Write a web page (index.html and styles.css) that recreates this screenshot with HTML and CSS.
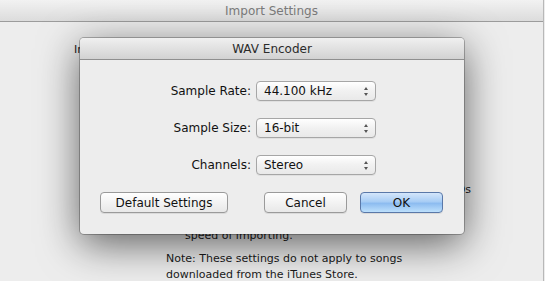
FILE: index.html
```html
<!DOCTYPE html>
<html lang="en">
<head>
    <meta charset="UTF-8">
    <title>Import Settings</title>
    <link rel="stylesheet" href="styles.css">
</head>
<body>
    <div class="window">
        <div class="titlebar">Import Settings</div>
        <div class="window-body">
            <div class="row-label">Import Using:</div>
            <div class="check-line">Use error correction when reading Audio CDs</div>
            <div class="hint">speed of importing.</div>
            <div class="note">Note: These settings do not apply to songs<br>downloaded from the iTunes Store.</div>
        </div>

        <div class="sheet">
            <div class="sheet-title">WAV Encoder</div>
            <div class="sheet-body">
                <div class="form-row">
                    <span class="label">Sample Rate:</span>
                    <div class="popup"><span>44.100 kHz</span><i class="arrows"></i></div>
                </div>
                <div class="form-row">
                    <span class="label">Sample Size:</span>
                    <div class="popup"><span>16-bit</span><i class="arrows"></i></div>
                </div>
                <div class="form-row">
                    <span class="label">Channels:</span>
                    <div class="popup"><span>Stereo</span><i class="arrows"></i></div>
                </div>
                <div class="buttons">
                    <button class="btn btn-default">Default Settings</button>
                    <button class="btn btn-cancel">Cancel</button>
                    <button class="btn btn-ok">OK</button>
                </div>
            </div>
        </div>
    </div>
</body>
</html>
```

FILE: styles.css
```css
body {
    margin: 0;
    font-family: 'DejaVu Sans', sans-serif;
    background: #ececec;
    overflow: hidden;
}

.window {
    position: relative;
    width: 543px;
    height: 281px;
    background: #ededed;
    border-right: 1px solid #b8b8b8;
}

.titlebar {
    height: 21px;
    line-height: 22px;
    text-align: center;
    font-size: 12px;
    color: #7b7b7b;
    background: linear-gradient(#f2f2f2, #dcdcdc);
    border-bottom: 1px solid #9c9c9c;
}

.window-body {
    font-size: 11px;
    color: #1a1a1a;
    padding: 20px 0 0 0;
}

.row-label {
    padding-left: 74px;
    height: 16px;
    line-height: 16px;
}

.check-line {
    margin-top: 124px;
    width: 471px;
    text-align: right;
    height: 16px;
    line-height: 16px;
}

/* the lines in between sit behind the sheet */
.hint {
    margin-top: 30px;
    padding-left: 185px;
    height: 15px;
    line-height: 15px;
}

.note {
    margin-top: 8px;
    padding-left: 166px;
    line-height: 16px;
}

.sheet {
    position: absolute;
    left: 80px;
    top: 38px;
    width: 384px;
    height: 196px;
    border-radius: 4px;
    background: #ededed;
    box-shadow:
        0 10px 40px rgba(0, 0, 0, 0.6),
        0 0 0 1px rgba(0, 0, 0, 0.25);
    overflow: hidden;
}

.sheet-title {
    height: 21px;
    line-height: 22px;
    text-align: center;
    font-size: 12px;
    color: #2b2b2b;
    background: linear-gradient(#f0f0f0, #d2d2d2);
    border-bottom: 1px solid #8f8f8f;
}

.sheet-body {
    padding: 21px 0 0 20px;
    font-size: 12px;
    color: #111;
}

.form-row {
    display: flex;
    align-items: center;
    gap: 5px;
    height: 20px;
    margin-bottom: 17px;
}

.label {
    width: 151px;
    text-align: right;
}

.popup {
    width: 105px;
    height: 18px;
    border: 1px solid #a6a6a6;
    border-radius: 4px;
    background: linear-gradient(#ffffff, #f1f1f1 50%, #e9e9e9);
    display: flex;
    align-items: center;
    justify-content: space-between;
    padding: 0 6px 0 7px;
    box-shadow: 0 1px 0 rgba(0, 0, 0, 0.05);
}

.popup span {
    font-size: 12px;
    line-height: 18px;
}

.arrows {
    position: relative;
    width: 5px;
    height: 9px;
}

.arrows::before,
.arrows::after {
    content: '';
    position: absolute;
    left: 0;
    border-left: 2.5px solid transparent;
    border-right: 2.5px solid transparent;
}

.arrows::before {
    top: 0;
    border-bottom: 3px solid #555;
}

.arrows::after {
    bottom: 0;
    border-top: 3px solid #555;
}

.buttons {
    display: flex;
    align-items: center;
    margin-top: 5px;
}

.btn {
    font-family: 'DejaVu Sans', sans-serif;
    font-size: 12px;
    color: #111;
    height: 21px;
    padding: 0;
    border: 1px solid #9a9a9a;
    border-radius: 4px;
    background: linear-gradient(#ffffff, #f3f3f3 50%, #e8e8e8);
    box-shadow: 0 1px 0 rgba(0, 0, 0, 0.08);
}

.btn-default {
    width: 128px;
}

.btn-cancel {
    width: 83px;
    margin-left: 36px;
}

.btn-ok {
    width: 83px;
    margin-left: 13px;
    border-color: #5a78a8;
    background: linear-gradient(#d4e6fb, #a8cdf5 45%, #8dbcf0 55%, #bde0fc);
}
```
